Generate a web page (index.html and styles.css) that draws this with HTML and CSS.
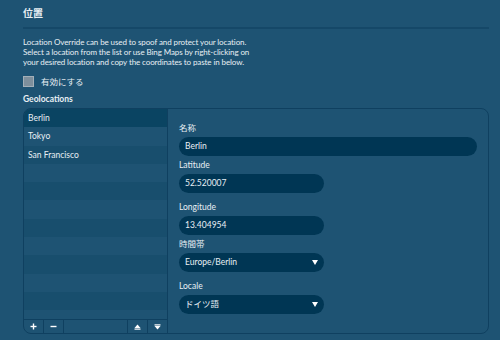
FILE: index.html
```html
<!DOCTYPE html>
<html>
<head>
    <meta charset="UTF-8">
    <title>位置</title>
    <link rel="stylesheet" href="styles.css">
</head>
<body>
    <div class="page">
        <header class="title">位置</header>
        <p class="desc">Location Override can be used to spoof and protect your location.<br>Select a location from the list or use Bing Maps by right-clicking on<br>your desired location and copy the coordinates to paste in below.</p>
        <label class="check">
            <span class="box"></span>
            <span>有効にする</span>
        </label>
        <div class="section">Geolocations</div>
        <div class="geo">
            <div class="list-col">
                <div class="list">
                    <div class="row selected">Berlin</div>
                    <div class="row">Tokyo</div>
                    <div class="row">San Francisco</div>
                    <div class="row"></div>
                    <div class="row"></div>
                    <div class="row"></div>
                    <div class="row"></div>
                    <div class="row"></div>
                    <div class="row"></div>
                    <div class="row"></div>
                    <div class="row"></div>
                    <div class="row"></div>
                </div>
                <div class="toolbar">
                    <div class="tool">
                        <svg width="7" height="7" viewBox="0 0 7 7"><rect x="2.8" y="0.5" width="1.4" height="6" fill="#fff"/><rect x="0.5" y="2.8" width="6" height="1.4" fill="#fff"/></svg>
                    </div>
                    <div class="tool">
                        <svg width="7" height="7" viewBox="0 0 7 7"><rect x="0.5" y="2.8" width="6" height="1.4" fill="#fff"/></svg>
                    </div>
                    <div class="tool spacer"></div>
                    <div class="tool">
                        <svg width="7" height="6" viewBox="0 0 7 6"><polygon points="3.5,0.5 6.5,4 0.5,4" fill="#fff"/><rect x="0.5" y="4.5" width="6" height="1.2" fill="#fff"/></svg>
                    </div>
                    <div class="tool">
                        <svg width="7" height="6" viewBox="0 0 7 6"><rect x="0.5" y="0.3" width="6" height="1.2" fill="#fff"/><polygon points="0.5,2 6.5,2 3.5,5.5" fill="#fff"/></svg>
                    </div>
                </div>
            </div>
            <div class="detail">
                <div class="field">
                    <div class="label">名称</div>
                    <div class="input wide">Berlin</div>
                </div>
                <div class="field">
                    <div class="label">Latitude</div>
                    <div class="input">52.520007</div>
                </div>
                <div class="field gap">
                    <div class="label">Longitude</div>
                    <div class="input">13.404954</div>
                </div>
                <div class="field">
                    <div class="label">時間帯</div>
                    <div class="input select">Europe/Berlin <span class="arrow"></span></div>
                </div>
                <div class="field gap">
                    <div class="label">Locale</div>
                    <div class="input select">ドイツ語 <span class="arrow"></span></div>
                </div>
            </div>
        </div>
    </div>
</body>
</html>
```

FILE: styles.css
```css
body {
    margin: 0;
    background-color: #1e5373;
    color: #e8eff4;
    font-family: Lato, "Noto Sans CJK JP", sans-serif;
    font-size: 8.5px;
}
.page {
    padding: 6px 11px 0 23px;
    height: 334px;
    display: flex;
    flex-direction: column;
}
.title {
    font-size: 10px;
    font-weight: bold;
    line-height: 14px;
    padding-bottom: 7px;
    border-bottom: 2px solid #154868;
}
.desc {
    margin: 8px 0 0 0;
    line-height: 10px;
    font-size: 8px;
    letter-spacing: -0.1px;
}
.check {
    display: flex;
    align-items: center;
    gap: 7px;
    margin-top: 8px;
    height: 12px;
}
.check .box {
    width: 9px;
    height: 9px;
    background-color: #7e8f9c;
    border: 1px solid #a3afb8;
}
.section {
    font-weight: bold;
    margin-top: 6px;
    line-height: 12px;
}
.geo {
    margin-top: 3px;
    height: 224px;
    display: flex;
    border: 1px solid #0f4060;
    border-radius: 8px;
    overflow: hidden;
}
.list-col {
    width: 143px;
    display: flex;
    flex-direction: column;
    border-right: 1px solid #0f4060;
}
.list {
    flex: 1;
    overflow: hidden;
}
.row {
    height: 18.3px;
    line-height: 18.3px;
    padding-left: 4px;
}
.row:nth-child(odd) {
    background-color: #184e6d;
}
.row.selected {
    background-color: #0a4462;
}
.toolbar {
    height: 13px;
    display: flex;
    border-top: 1px solid #0f4060;
}
.tool {
    width: 19px;
    display: flex;
    align-items: center;
    justify-content: center;
    border-right: 1px solid #0f4060;
}
.tool:last-child {
    border-right: none;
}
.tool.spacer {
    flex: 1;
}
.detail {
    flex: 1;
    padding: 12px 11px 0 11px;
}
.field.gap {
    margin-top: 7px;
}
.label {
    line-height: 14px;
    margin-bottom: 2px;
}
.input {
    width: 145px;
    height: 19px;
    line-height: 19px;
    background-color: #003654;
    border-radius: 10px;
    padding: 0 6px;
    box-sizing: border-box;
    margin-bottom: 2px;
}
.input.wide {
    width: 298px;
}
.input.select {
    display: flex;
    justify-content: space-between;
    align-items: center;
}
.arrow {
    width: 0;
    height: 0;
    border-left: 3.5px solid transparent;
    border-right: 3.5px solid transparent;
    border-top: 5px solid #ffffff;
}
```
